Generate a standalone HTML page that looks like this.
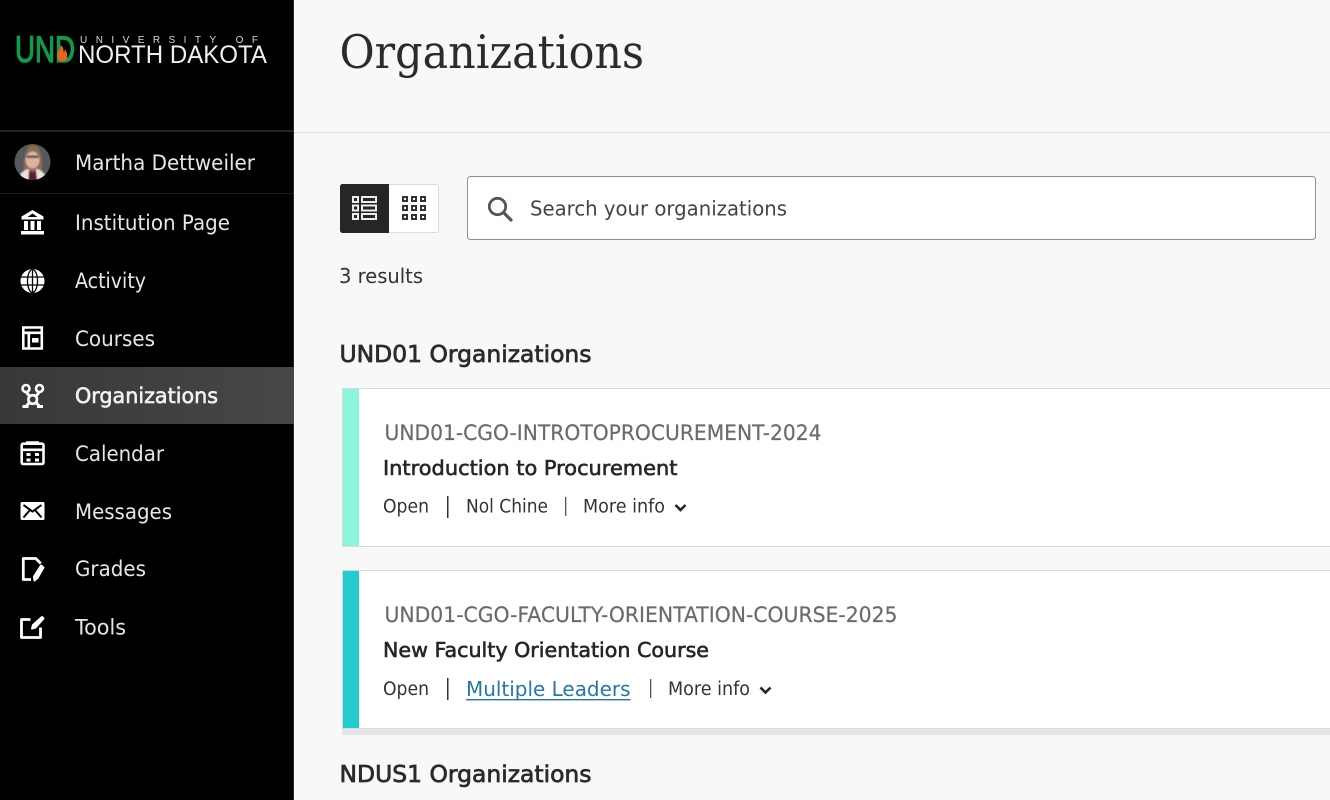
<!DOCTYPE html>
<html><head><meta charset="utf-8"><title>Organizations</title>
<style>
html,body{margin:0;padding:0;width:1330px;height:800px;overflow:hidden;background:#f8f8f8}
svg{display:block}
text{font-family:"DejaVu Sans","Liberation Sans",sans-serif}
.nav{font-size:21px;fill:#e6e6e6}
.meta{font-size:18.5px;fill:#333}
.h2{font-size:23px;fill:#2b2b2b;stroke:#2b2b2b;stroke-width:.7px}
.code{font-size:21px;fill:#6b6b6b;stroke:#6b6b6b;stroke-width:.2px}
.title{font-size:20.5px;fill:#262626;stroke:#262626;stroke-width:.6px}
</style></head>
<body>
<svg width="1330" height="800" viewBox="0 0 1330 800" xmlns="http://www.w3.org/2000/svg">
<defs>
<linearGradient id="act" x1="0" x2="1" y1="0" y2="0"><stop offset="0" stop-color="#383838"/><stop offset="1" stop-color="#474747"/></linearGradient>
<clipPath id="av"><circle cx="32.500" cy="162" r="18"/></clipPath>
<filter id="bl" x="-10%" y="-10%" width="120%" height="120%"><feGaussianBlur stdDeviation="0.7"/></filter>
</defs>
<!-- main -->
<rect width="1330" height="800" fill="#f8f8f8"/>
<rect x="294" y="132" width="1036" height="1" fill="#dedede"/>
<text x="339.500" y="68" font-size="46" textLength="304.500" lengthAdjust="spacingAndGlyphs" style="font-family:'DejaVu Serif','Liberation Serif',serif" fill="#2b2b2b">Organizations</text>

<!-- sidebar -->
<rect width="294" height="800" fill="#000"/>
<rect x="293" width="1" height="800" fill="#2a2a2a"/>
<rect y="130" width="293" height="2" fill="#242424"/>
<rect y="193" width="293" height="1" fill="#1c1c1c"/>
<rect y="367" width="294" height="57" fill="url(#act)"/>

<!-- logo -->
<text x="15" y="62" font-size="37" textLength="60" lengthAdjust="spacingAndGlyphs" style="font-family:'Liberation Sans',sans-serif;stroke:#0f9b4a;stroke-width:1.300px" fill="#0f9b4a">UND</text>
<path d="M60.500 61.500c-3.500-2-4.500-6-2.500-9.500 1-2 2.500-3.500 2.800-7 3 2.500 3 5 2.700 7.500 1-.8 1.300-2 1.500-3.500 3 4.500 3 9.500.3 11.500-1.300.8-3 1.200-4.800 1z" fill="#e8661c"/>
<text x="80" y="43" font-size="10" textLength="178" style="font-family:'Liberation Sans',sans-serif" fill="#d8d8d8">UNIVERSITY OF</text>
<text x="78" y="63" font-size="25" textLength="189" lengthAdjust="spacingAndGlyphs" style="font-family:'Liberation Sans',sans-serif" fill="#f0f0f0">NORTH DAKOTA</text>

<!-- avatar -->
<g clip-path="url(#av)">
<rect x="14" y="144" width="37" height="37" fill="#55585c"/>
<g filter="url(#bl)">
<path d="M24 172c-1-17 3-27 9-27s10 9 9 27z" fill="#8f6b50"/>
<ellipse cx="32.500" cy="160" rx="7" ry="8.500" fill="#d9b3a0"/>
<rect x="26.500" y="155.500" width="12" height="2.500" fill="#55505a"/>
<path d="M18 184c0-8 3-13 10-15l4.500 3 4.500-3c7 2 10 7 10 15z" fill="#e8e2d8"/>
<path d="M28 184l1-14 3.500 2 3.500-2 1.500 14z" fill="#5a1f33"/>
</g>
</g>
<text x="75" y="170" class="nav" textLength="180" lengthAdjust="spacingAndGlyphs">Martha Dettweiler</text>

<!-- nav text -->
<text x="75" y="230" class="nav" textLength="155" lengthAdjust="spacingAndGlyphs">Institution Page</text>
<text x="75" y="288" class="nav" textLength="71" lengthAdjust="spacingAndGlyphs">Activity</text>
<text x="75" y="346" class="nav" textLength="80" lengthAdjust="spacingAndGlyphs">Courses</text>
<text x="75" y="403" class="nav" textLength="143" lengthAdjust="spacingAndGlyphs" style="fill:#f2f2f2;stroke:#f2f2f2;stroke-width:.6px">Organizations</text>
<text x="75" y="461" class="nav" textLength="89" lengthAdjust="spacingAndGlyphs">Calendar</text>
<text x="75" y="519" class="nav" textLength="97" lengthAdjust="spacingAndGlyphs">Messages</text>
<text x="75" y="576" class="nav" textLength="71" lengthAdjust="spacingAndGlyphs">Grades</text>
<text x="75" y="634.500" class="nav" textLength="51" lengthAdjust="spacingAndGlyphs">Tools</text>

<!-- nav icons -->
<g fill="#fff">
<path d="M32.500 210l11 6.500v3h-22v-3zM32.500 213.500l-5 3.500h10z" fill-rule="evenodd"/>
<path d="M24 221h4v9h-4zM30.500 221h4v9h-4zM37 221h4v9h-4zM21 231h23v3.500H21z"/>
<circle cx="32.500" cy="281" r="12"/>
</g>
<g fill="none" stroke="#000" stroke-width="1.300">
<ellipse cx="32.500" cy="281" rx="5" ry="11.500"/>
<path d="M32.500 269.500v23M21 277h23M21 285h23"/>
</g>
<g fill="none" stroke="#fff" stroke-width="2.600">
<path d="M23.300 327.500h18.500v21H23.300zM23.300 332.800h18.500M28.800 333v15"/>
<rect x="32" y="338" width="6.500" height="4.500" fill="#fff" stroke="none"/>
<circle cx="26" cy="388.500" r="3.500"/>
<circle cx="39.500" cy="388.500" r="3.500"/>
<circle cx="32.700" cy="399.500" r="4.300"/>
<path d="M26.500 392.500l3 3.500M39 392.500l-3 3.500M29 403l-3.500 4M36.500 403l3.500 4M22.500 406.500h6M37 406.500h6" stroke-width="3"/>
<rect x="21.700" y="443.700" width="21.800" height="20.300" rx="1.500"/>
<path d="M21.500 449.800h22M26 442.500h13"/>
</g>
<g fill="#fff">
<rect x="26.500" y="453" width="4" height="3"/><rect x="35" y="453" width="4" height="3"/>
<rect x="26.500" y="458.500" width="4" height="3"/><rect x="35" y="458.500" width="4" height="3"/>
<rect x="20.500" y="502" width="24" height="18" rx="1.500"/>
</g>
<path d="M23.500 505l9 6.500 9-6.500M23.500 517.500l6.500-7.500M41.500 517.500l-6.500-7.500" fill="none" stroke="#000" stroke-width="2"/>
<g fill="none" stroke="#fff" stroke-width="2.800" stroke-linejoin="round">
<path d="M31 579.500H23.300V558.500h12.500l5 5"/>
<path d="M41 565.500l2.500 2-6 10.500-3 2.500-.5-4z" fill="#fff" stroke-width="2"/>
<path d="M30.500 619.500H21.500v18h19v-10"/>
<path d="M42 617l1.500 1.500-8 9-3.500 1 1-3.500z" fill="#fff" stroke-width="2"/>
</g>

<!-- toggle -->
<rect x="340.500" y="184.500" width="98" height="48" rx="2.500" fill="#fff" stroke="#dcdcdc"/>
<path d="M342.500 184h46.500v49h-46.500a2.500 2.500 0 0 1-2.500-2.500v-44a2.500 2.500 0 0 1 2.500-2.500z" fill="#262626"/>
<g fill="none" stroke="#ededed" stroke-width="2">
<rect x="353" y="197" width="5" height="5"/><rect x="353" y="205.500" width="5" height="5"/><rect x="353" y="214" width="5" height="5"/>
<rect x="362" y="197" width="14" height="5"/><rect x="362" y="205.500" width="14" height="5"/><rect x="362" y="214" width="14" height="5"/>
</g>
<g fill="none" stroke="#333" stroke-width="2">
<rect x="403" y="197" width="4" height="4"/><rect x="412" y="197" width="4" height="4"/><rect x="421" y="197" width="4" height="4"/>
<rect x="403" y="206" width="4" height="4"/><rect x="412" y="206" width="4" height="4"/><rect x="421" y="206" width="4" height="4"/>
<rect x="403" y="215" width="4" height="4"/><rect x="412" y="215" width="4" height="4"/><rect x="421" y="215" width="4" height="4"/>
</g>

<!-- search -->
<rect x="467.500" y="176.500" width="848" height="63" rx="3" fill="#fff" stroke="#909090" stroke-width="1"/>
<circle cx="497.500" cy="206.500" r="8.200" fill="none" stroke="#555" stroke-width="2.800"/>
<path d="M503.500 212.500l7.500 7.500" stroke="#555" stroke-width="3.200" stroke-linecap="round"/>
<text x="530" y="215.500" font-size="20" fill="#444" textLength="257" lengthAdjust="spacingAndGlyphs">Search your organizations</text>

<text x="339" y="283" font-size="20" fill="#333" textLength="84" lengthAdjust="spacingAndGlyphs">3 results</text>
<text x="339.500" y="362" class="h2" textLength="252" lengthAdjust="spacingAndGlyphs">UND01 Organizations</text>

<!-- card 1 -->
<rect x="342.500" y="388.500" width="990" height="158" fill="#fff" stroke="#dadada"/>
<rect x="343" y="389" width="16" height="157" fill="#8af5dc"/>
<text x="384.500" y="440" class="code" textLength="437" lengthAdjust="spacingAndGlyphs">UND01-CGO-INTROTOPROCUREMENT-2024</text>
<text x="383" y="475" class="title" textLength="294.500" lengthAdjust="spacingAndGlyphs">Introduction to Procurement</text>
<text x="383" y="512.500" class="meta" textLength="46" lengthAdjust="spacingAndGlyphs">Open</text>
<rect x="447" y="496" width="1.500" height="22" fill="#333"/>
<text x="466" y="512.500" class="meta" textLength="82" lengthAdjust="spacingAndGlyphs">Nol Chine</text>
<rect x="565" y="497" width="1.300" height="19" fill="#555"/>
<text x="583" y="512.500" class="meta" textLength="82" lengthAdjust="spacingAndGlyphs">More info</text>
<path d="M675.500 505l5 5 5-5" fill="none" stroke="#262626" stroke-width="2.600"/>

<!-- card 2 -->
<rect x="342" y="729" width="988" height="6" fill="#e6e6e6"/>
<rect x="342.500" y="570.500" width="990" height="158" fill="#fff" stroke="#dadada"/>
<rect x="343" y="571" width="16" height="157" fill="#22cccf"/>
<text x="384.500" y="622" class="code" textLength="513" lengthAdjust="spacingAndGlyphs">UND01-CGO-FACULTY-ORIENTATION-COURSE-2025</text>
<text x="383" y="657" class="title" textLength="326" lengthAdjust="spacingAndGlyphs">New Faculty Orientation Course</text>
<text x="383" y="695" class="meta" textLength="46" lengthAdjust="spacingAndGlyphs">Open</text>
<rect x="447" y="678" width="1.500" height="22" fill="#333"/>
<text x="466" y="696" font-size="20.500" fill="#2677a8" textLength="164.500" lengthAdjust="spacingAndGlyphs">Multiple Leaders</text>
<rect x="466" y="699" width="164.500" height="1.400" fill="#2677a8"/>
<rect x="650" y="679" width="1.300" height="19" fill="#555"/>
<text x="668" y="695" class="meta" textLength="82" lengthAdjust="spacingAndGlyphs">More info</text>
<path d="M760.500 687.500l5 5 5-5" fill="none" stroke="#262626" stroke-width="2.600"/>

<text x="339.500" y="782" class="h2" textLength="252" lengthAdjust="spacingAndGlyphs">NDUS1 Organizations</text>
</svg>
</body></html>
